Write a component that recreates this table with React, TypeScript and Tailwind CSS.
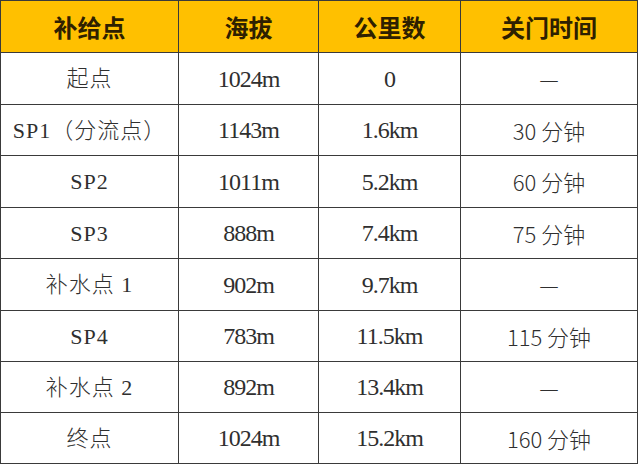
const headers = ["补给点", "海拔", "公里数", "关门时间"];

const rows: [string, string, string, string][] = [
  ["起点", "1024m", "0", "—"],
  ["SP1（分流点）", "1143m", "1.6km", "30 分钟"],
  ["SP2", "1011m", "5.2km", "60 分钟"],
  ["SP3", "888m", "7.4km", "75 分钟"],
  ["补水点 1", "902m", "9.7km", "—"],
  ["SP4", "783m", "11.5km", "115 分钟"],
  ["补水点 2", "892m", "13.4km", "—"],
  ["终点", "1024m", "15.2km", "160 分钟"],
];

const serif = "font-['Liberation_Serif','Noto_Sans_CJK_SC',serif]";
const sans = "font-['Noto_Sans_CJK_SC',sans-serif]";

function cellText(j: number) {
  if (j === 0) return `text-[22px] font-light tracking-[1px] ${serif}`;
  if (j === 3) return `text-[22px] font-light ${sans}`;
  return `text-[24px] tracking-[-1px] ${serif}`;
}

export default function App() {
  return (
    <div className="w-[640px] h-[466px] bg-white">
      <div className="grid w-[638px] grid-cols-[178px_140px_142px_177px] grid-rows-[52px_52px_51px_52px_51px_52px_51px_51px_51px] border-l border-t border-[#3a3a3a]">
        {headers.map((h) => (
          <div
            key={h}
            className={`flex items-center justify-center border-r border-b border-[#3a3a3a] bg-[#ffc000] text-[24px] font-bold text-[#2e2000] ${sans}`}
          >
            {h}
          </div>
        ))}
        {rows.map((r, i) =>
          r.map((c, j) => (
            <div
              key={`${i}-${j}`}
              className={`flex items-center justify-center border-r border-b border-[#3a3a3a] text-[#2f2f2f] ${cellText(j)}`}
            >
              {c}
            </div>
          ))
        )}
      </div>
    </div>
  );
}
